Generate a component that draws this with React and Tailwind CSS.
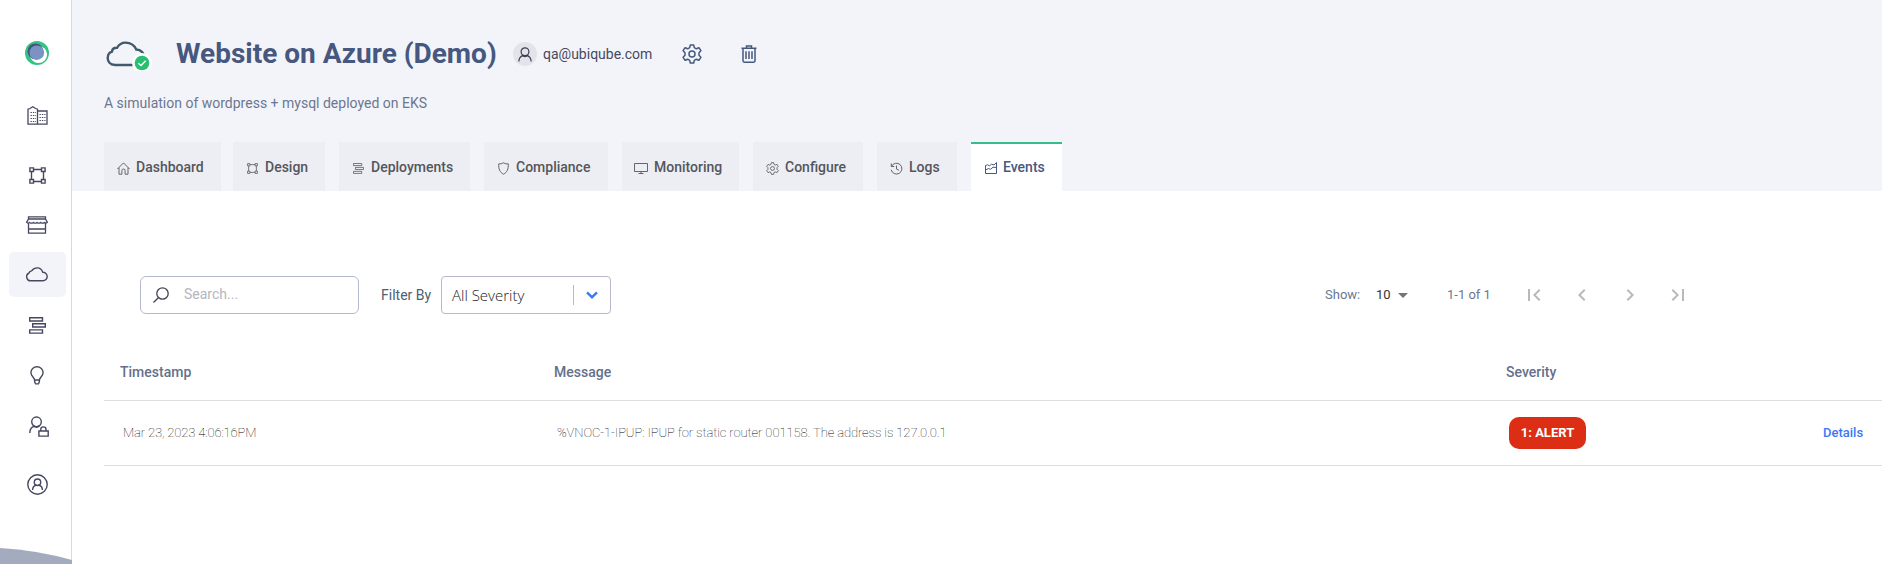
import React from "react";

function Icon({ className, viewBox = "0 0 24 24", sw = 1.4, children }) {
  return (
    <svg className={`block shrink-0 ${className}`} viewBox={viewBox} fill="none" stroke="currentColor" strokeWidth={sw}>
      {children}
    </svg>
  );
}

const Logo = () => (
  <svg className="block h-6 w-6" viewBox="0 0 24 24">
    <circle cx="12" cy="12" r="12" fill="#36c285" />
    <circle cx="13.500" cy="13.500" r="8.600" fill="#ffffff" />
    <circle cx="10.400" cy="10.300" r="7.900" fill="#465579" />
    <circle cx="11.800" cy="11.700" r="7.300" fill="#7b92c4" />
  </svg>
);

const BuildingIcon = () => (
  <Icon className="h-[19px] w-[21px]" viewBox="0 0 21 19">
    <path d="M1 18.200V3.200L3 2.500 5.800.800 8.600 2.500 10.500 3.200V18.200ZM10.500 5H20V18.200H10.500" strokeWidth="1.300" />
    <path d="M3.500 6.500H9M3.500 9.500H9M3.500 12.500H9M3.500 15.500H9M12.500 8.500H18.500M12.500 11.500H18.500M12.500 14.500H18.500" strokeDasharray="1.400 1" strokeWidth="1" />
  </Icon>
);

const NodesIcon = ({ className, sw = 1.4 }) => (
  <Icon className={className} viewBox="0 0 17 17" sw={sw}>
    <path d="M.900 .900H4.500V4.500H.900ZM12.500 .900H16.100V4.500H12.500ZM.900 12.500H4.500V16.100H.900ZM12.500 12.500H16.100V16.100H12.500ZM4.500 2.500H12.500M4.500 14.500H12.500M2.500 4.500V12.500M14.500 4.500V12.500" />
  </Icon>
);

const StoreIcon = () => (
  <Icon className="h-[18px] w-[22px]" viewBox="0 0 22 18" sw={1.3}>
    <path d="M2.500 .800H19.500V3L21.300 6.200Q19.900 7.800 18.300 6.400 16.500 7.800 14.700 6.400 12.900 7.800 11 6.400 9.100 7.800 7.300 6.400 5.500 7.800 3.700 6.400 2.100 7.800 .700 6.200L2.500 3ZM2.500 3H19.500M2.500 7V17.200H19.500V7M2.500 13H19.500" />
  </Icon>
);

const CloudIcon = () => (
  <Icon className="h-[15px] w-[22px]" viewBox="0 0 22 15" sw={1.4}>
    <path d="M5 13.800A4.100 4.100 0 0 1 3 6Q3.500 4.200 5.600 3.900 8 .800 11.300 .900 15.300 1 16.800 5.300A4.300 4.300 0 0 1 21.200 9.600 4.200 4.200 0 0 1 17 13.800Z" />
  </Icon>
);

const BarsIcon = ({ className, sw = 1.4 }) => (
  <Icon className={className} viewBox="0 0 17 17" sw={sw}>
    <path d="M.700 .800H13.500V4H.700ZM3.700 6.800H16.300V10H3.700ZM.700 12.900H13.500V16.100H.700Z" />
  </Icon>
);

const BulbIcon = () => (
  <Icon className="h-[19px] w-[14px]" viewBox="0 0 14 19">
    <path d="M4.500 14C4.500 11.300 .900 10.500 .900 6.500A6.100 5.700 0 0 1 13.100 6.500C13.100 10.500 9.500 11.300 9.500 14ZM4.700 14V16.200L5.600 17.900H8.400L9.300 16.200V14" />
  </Icon>
);

const UserLockIcon = () => (
  <Icon className="h-[21px] w-[20px]" viewBox="0 0 20 21">
    <circle cx="7.500" cy="5.800" r="4.800" />
    <path d="M.800 17C.900 13 3 10.500 5.800 10.200M4.500 9.800Q7.500 12.500 10.500 9.800M9.900 15H19.200V20.100H9.900ZM11.800 15V13.200A2.600 2.300 0 0 1 17 13.200V15" />
  </Icon>
);

const UserCircleIcon = () => (
  <Icon className="h-[21px] w-[21px]" viewBox="0 0 21 21">
    <circle cx="10.500" cy="10.500" r="9.700" />
    <circle cx="10.500" cy="8.200" r="3.200" />
    <path d="M5.600 16C5.700 13.500 7.200 11.700 9 11.300M15.400 16C15.300 13.500 13.800 11.700 12 11.300M8.400 10.800Q10.500 12.500 12.600 10.800" />
  </Icon>
);

const Gear = ({ className, sw }) => (
  <Icon className={className} viewBox="0 0 20 20" sw={sw}>
    <path strokeLinejoin="round" d="M8.300 1H11.700L12.300 3.600 14.300 4.800 16.900 3.700 18.900 6.700 17 8.700V11.300L18.900 13.300 16.900 16.300 14.300 15.200 12.300 16.400 11.700 19H8.300L7.700 16.400 5.700 15.200 3.100 16.300 1.100 13.300 3 11.300V8.700L1.100 6.700 3.100 3.700 5.700 4.800 7.700 3.600Z" />
    <circle cx="10" cy="10" r="3" />
  </Icon>
);

const HomeIcon = () => (
  <Icon className="h-[13px] w-[13px]" viewBox="0 0 13 13" sw={0.9}>
    <path d="M.400 7 6.500 .900 12.600 7M2 5.800V12.200H4.900V8.600A1.600 1.600 0 0 1 8.100 8.600V12.200H11V5.800" />
  </Icon>
);
const ShieldIcon = () => (
  <Icon className="h-[13px] w-[11px]" viewBox="0 0 11 13" sw={0.9}>
    <path d="M5.500 .800Q7.500 2.200 10.300 1.900C10.500 7 9.200 10.300 5.500 12.200 1.800 10.300 .500 7 .700 1.900Q3.500 2.200 5.500 .800Z" />
  </Icon>
);
const MonitorIcon = () => (
  <Icon className="h-[12px] w-[14px]" viewBox="0 0 14 12" sw={0.9}>
    <path d="M.500 1.500H13.500V9.500H.500ZM7 9.500V11.500M4.500 11.500H9.500" />
  </Icon>
);
const HistoryIcon = () => (
  <Icon className="h-[13px] w-[13px]" viewBox="0 0 13 13" sw={0.9}>
    <path d="M1.300 1.500V4.500H4.300M1.600 4.300A5.400 5.400 0 1 1 1.200 7.800M6.500 3.500V7L9 8.300" />
  </Icon>
);
const EventsIcon = () => (
  <Icon className="h-[12px] w-[12px]" viewBox="0 0 12 12" sw={1}>
    <path d="M.500 3.500V11.500H11.500V.500L9 3 6.500 2.200 4.500 3.800 2.500 2.800ZM.500 8 3.500 6.500 5.500 7.300 8 5.200 11.500 5.500" />
  </Icon>
);

const TABS = [
  { label: "Dashboard", icon: <HomeIcon />, box: "w-[117px] mr-3 pl-[13px]", gap: "mr-[6px]" },
  { label: "Design", icon: <NodesIcon className="h-[11px] w-[11px]" sw={1.2} />, box: "w-[92px] mr-[14px] pl-[14px]", gap: "mr-[7px]" },
  { label: "Deployments", icon: <BarsIcon className="h-[11px] w-[11px]" sw={1.2} />, box: "w-[131px] mr-[14px] pl-[14px]", gap: "mr-[7px]" },
  { label: "Compliance", icon: <ShieldIcon />, box: "w-[124px] mr-[14px] pl-[14px]", gap: "mr-[7px]" },
  { label: "Monitoring", icon: <MonitorIcon />, box: "w-[117px] mr-[14px] pl-[12px]", gap: "mr-[6px]" },
  { label: "Configure", icon: <Gear className="h-[13px] w-[13px]" sw={1.3} />, box: "w-[110px] mr-[14px] pl-[13px]", gap: "mr-[6px]" },
  { label: "Logs", icon: <HistoryIcon />, box: "w-[80px] mr-[14px] pl-[13px]", gap: "mr-[6px]" },
  { label: "Events", icon: <EventsIcon />, box: "w-[91px] pl-[14px]", gap: "mr-[6px]", active: true },
];

function Sidebar() {
  return (
    <aside className="flex w-[72px] shrink-0 flex-col items-center border-r border-[#d6d9e5] bg-white pt-[41px] pl-[3px] text-[#454860]">
      <Logo />
      <div className="mt-[41px]"><BuildingIcon /></div>
      <div className="mt-[42px]"><NodesIcon className="h-[17px] w-[17px]" /></div>
      <div className="mt-[32px]"><StoreIcon /></div>
      <div className="mt-[18px] flex h-[45px] w-[57px] items-center justify-center rounded-[5px] bg-[#f3f4f9]"><CloudIcon /></div>
      <div className="mt-[20px]"><BarsIcon className="h-[17px] w-[17px]" /></div>
      <div className="mt-[32px]"><BulbIcon /></div>
      <div className="mt-[31px] pl-[4px]"><UserLockIcon /></div>
      <div className="mt-[37px]"><UserCircleIcon /></div>
      <svg className="mt-auto -ml-[3px] block h-[17px] w-[72px] shrink-0 -mr-px" viewBox="0 0 72 17">
        <path d="M0 1Q36 3 72 13V17H0Z" fill="#a3abbf" />
      </svg>
    </aside>
  );
}

function Header() {
  return (
    <header className="flex h-[191px] flex-col bg-[#f3f4f9] pl-8">
      <div className="mt-[41px] flex h-[26px] items-center">
        <svg className="mr-5 block h-[34px] w-[52px] shrink-0" viewBox="0 0 52 34" fill="none">
          <path d="M11 28C6 27.800 3.700 24.500 3.700 21 3.700 18 5.500 15.500 8 14.700 8.200 12 10.500 10.700 13 10.800 15 7.300 18 5.600 21.500 5.600 26 5.600 30 7.500 32.300 12.500 37 12.500 40.500 16.500 40.500 21.500A6.500 6.500 0 0 1 34 28Z" stroke="#42596b" strokeWidth="2.400" />
          <circle cx="38" cy="26" r="10" fill="#ffffff" />
          <circle cx="38" cy="26" r="7.300" fill="#28bf73" />
          <path d="M34.300 26.200 37 28.500 41.700 23.800" stroke="#ffffff" strokeWidth="1.400" />
        </svg>
        <h1 className="w-[337px] whitespace-nowrap text-[28px] leading-8 font-bold text-[#46587f]">Website on Azure (Demo)</h1>
        <span className="flex h-6 w-6 items-center justify-center rounded-full bg-[#e2e4e9] text-[#3b3d52]">
          <Icon className="h-[15px] w-[14px]" viewBox="0 0 14 15" sw={1.2}>
            <circle cx="7" cy="4.800" r="3.900" />
            <path d="M.900 14.500C1 11.500 2.800 9.300 5 8.700M13.100 14.500C13 11.500 11.200 9.300 9 8.700M4 7.800Q7 11.500 10 7.800" />
          </Icon>
        </span>
        <span className="ml-[6px] w-[139px] text-sm text-[#46495f]">qa@ubiqube.com</span>
        <Gear className="h-5 w-5 text-[#46587f]" sw={1.5} />
        <Icon className="ml-[39px] h-[18px] w-4 text-[#46587f]" viewBox="0 0 16 18" sw={1.5}>
          <path d="M.500 3.200H15.500M5.500 3V1H10.500V3M2 3.500V15.800Q2 17.200 3.400 17.200H12.600Q14 17.200 14 15.800V3.500M5 6.200V14M8 6.200V14M11 6.200V14" />
        </Icon>
      </div>
      <p className="mt-[26px] text-sm leading-5 text-[#6b7790]">A simulation of wordpress + mysql deployed on EKS</p>
      <nav className="mt-auto flex h-[49px]">
        {TABS.map((t) => (
          <div
            key={t.label}
            className={`flex shrink-0 items-center border-t-2 text-sm font-medium ${t.box} ${t.active ? "border-[#36be89] bg-white text-[#46587f]" : "border-[#edeef3] bg-[#edeef3] text-[#55565b]"}`}
          >
            <span className={`mt-px ${t.gap}`}>{t.icon}</span>
            <span className="-mt-px">{t.label}</span>
          </div>
        ))}
      </nav>
    </header>
  );
}

function Toolbar() {
  return (
    <div className="mt-[85px] flex h-[38px] items-center pl-[68px]">
      <div className="flex h-[38px] w-[219px] shrink-0 items-center rounded-md border border-[#b3bad0] pl-3">
        <Icon className="h-4 w-4 text-[#45424f]" viewBox="0 0 16 16" sw={1.3}>
          <circle cx="9.500" cy="6.500" r="5.700" />
          <path d="M5.300 10.700 .500 15.500" />
        </Icon>
        <span className="ml-[15px] pb-[2px] text-sm text-[#b4b6bd]">Search...</span>
      </div>
      <span className="ml-[22px] w-[60px] shrink-0 text-sm text-[#4c5f73]">Filter By</span>
      <div className="flex h-[38px] w-[170px] shrink-0 items-center rounded border border-[#b8b8cf] pl-[10px]">
        <span className="w-[121px] font-['Open_Sans'] text-[15px] font-light text-[#222]">All Severity</span>
        <span className="h-5 w-px bg-[#b8b8cf]" />
        <Icon className="ml-3 h-2 w-3" viewBox="0 0 12 8" sw={2.4}>
          <path d="M1 1.300 6 6.200 11 1.300" stroke="#3b7bf6" />
        </Icon>
      </div>
      <div className="ml-[714px] flex items-center text-[13px] text-[#6b7790]">
        <span className="w-[51px]">Show:</span>
        <span className="w-[22px] text-[#333]">10</span>
        <svg className="block h-[5px] w-[10px]" viewBox="0 0 10 5"><path d="M0 0H10L5 5Z" fill="#757575" /></svg>
        <span className="ml-[39px] w-[75px]">1-1 of 1</span>
        <div className="flex gap-6 text-[#b9b9b9]">
          {[
            "M18.410 16.590 13.820 12l4.590-4.590L17 6l-6 6 6 6zM6 6h2v12H6z",
            "M15.410 7.410 14 6l-6 6 6 6 1.410-1.410L10.830 12z",
            "M10 6 8.590 7.410 13.170 12l-4.580 4.590L10 18l6-6z",
            "M5.590 7.410 10.180 12l-4.590 4.590L7 18l6-6-6-6zM16 6h2v12h-2z",
          ].map((d) => (
            <svg key={d} className="block h-6 w-6" viewBox="0 0 24 24" fill="currentColor"><path d={d} /></svg>
          ))}
        </div>
      </div>
    </div>
  );
}

function EventsTable() {
  return (
    <div className="mt-[30px] ml-8">
      <div className="grid h-[57px] grid-cols-[434px_952px_1fr] items-center border-b border-[#dedede] text-sm font-medium text-[#64708a]">
        <span className="pl-4">Timestamp</span>
        <span className="pl-4">Message</span>
        <span className="pl-4">Severity</span>
      </div>
      <div className="grid h-[65px] grid-cols-[434px_952px_333px_1fr] items-center border-b border-[#dedede] text-[13px]">
        <span className="pl-[19px] font-thin tracking-[-0.12px] text-black">Mar 23, 2023 4:06:16PM</span>
        <span className="pl-[19px] font-thin tracking-[-0.09px] text-black">%VNOC-1-IPUP: IPUP for static router 001158. The address is 127.0.0.1</span>
        <span className="pl-[19px]">
          <span className="flex h-8 w-[77px] items-center justify-center rounded-[10px] bg-[#dc2d15] font-bold text-white">1: ALERT</span>
        </span>
        <span className="font-medium text-[#3b78f6]">Details</span>
      </div>
    </div>
  );
}

export default function App() {
  return (
    <div className="flex h-[564px] w-full overflow-hidden bg-white font-['Roboto',sans-serif]">
      <Sidebar />
      <main className="min-w-0 flex-1">
        <Header />
        <Toolbar />
        <EventsTable />
      </main>
    </div>
  );
}
